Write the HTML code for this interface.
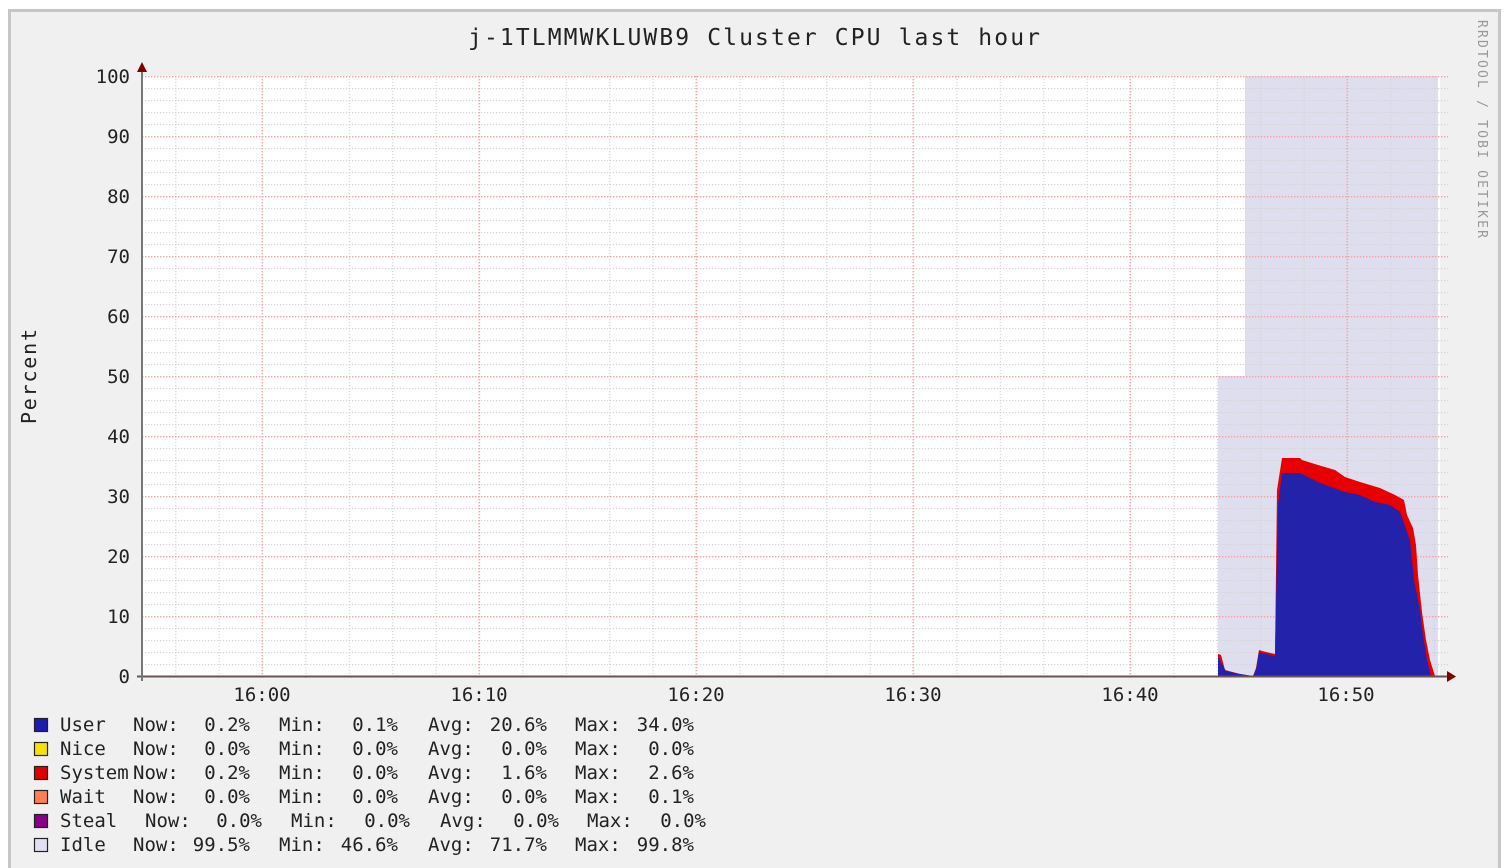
<!DOCTYPE html>
<html><head><meta charset="utf-8"><style>
html,body{margin:0;padding:0;background:#fff;width:1504px;height:868px;overflow:hidden}
svg{display:block}
text{font-family:"DejaVu Sans Mono","Liberation Mono",monospace;fill:#222}
</style></head><body>
<svg width="1504" height="868" viewBox="0 0 1504 868" xmlns="http://www.w3.org/2000/svg">
<defs>
<pattern id="hmin" x="142" y="76" width="3" height="12" patternUnits="userSpaceOnUse"><rect width="1.2" height="1.2" fill="#d4d4d4"/></pattern>
<pattern id="hmaj" x="142" y="76" width="3" height="60" patternUnits="userSpaceOnUse"><rect width="1.4" height="1.4" fill="#f4a4a4"/></pattern>
<pattern id="vmin" x="175.2" y="76" width="43.4" height="3" patternUnits="userSpaceOnUse"><rect width="1.2" height="1.2" fill="#d4d4d4"/></pattern>
<pattern id="vmaj" x="261.5" y="76" width="217" height="3" patternUnits="userSpaceOnUse"><rect width="1.4" height="1.4" fill="#f4a4a4"/></pattern>
</defs>
<rect x="0" y="0" width="1504" height="868" fill="#fff"/>
<rect x="9.5" y="10.5" width="1490" height="860" fill="#f0f0f0" stroke="#c6c6c6" stroke-width="3"/>
<rect x="142" y="76" width="1298" height="600" fill="#fff"/>
<polygon points="1218,676 1218,376 1245,376 1245,76 1438,76 1438,676" fill="#dedeef"/>
<rect x="142" y="76" width="1306" height="600" fill="url(#hmin)"/>
<rect x="142" y="76" width="1298" height="600" fill="url(#vmin)"/>
<rect x="142" y="76" width="1306" height="601" fill="url(#hmaj)"/>
<rect x="142" y="76" width="1298" height="600" fill="url(#vmaj)"/>
<polygon fill="#e80000" points="1218,676 1218,654 1221,655 1225,670 1240,674 1253,676 1256,668 1259,650 1262,651 1275,654 1277,490 1282,458 1300,458 1302,460 1318,465 1335,470 1345,477 1360,482 1380,488 1395,495 1404,500 1407,515 1413,528 1416,545 1418,575 1422,612 1426,640 1430,660 1435,676"/>
<polygon fill="#2222aa" points="1218,676 1218,657 1222,664 1226,671 1240,674 1253,676 1256,670 1259,652 1262,653 1275,656 1278,505 1282,473 1300,473 1320,483 1345,492 1360,495 1375,502 1390,505 1400,512 1410,540 1414,580 1420,610 1423,635 1427,660 1431,676"/>
<line x1="137" y1="676.5" x2="1448" y2="676.5" stroke="#6a5555" stroke-width="2"/>
<polygon points="1447,671 1456,676.5 1447,682" fill="#800000"/>
<line x1="142" y1="681" x2="142" y2="70" stroke="#777" stroke-width="2"/>
<polygon points="137,72 142,62 147,72" fill="#800000"/>
<g font-size="19" text-anchor="end">
<text x="130" y="83">100</text><text x="130" y="143">90</text><text x="130" y="203">80</text><text x="130" y="263">70</text><text x="130" y="323">60</text><text x="130" y="383">50</text><text x="130" y="443">40</text><text x="130" y="503">30</text><text x="130" y="563">20</text><text x="130" y="623">10</text><text x="130" y="683">0</text>
</g>
<g font-size="19" text-anchor="middle">
<text x="262" y="701">16:00</text><text x="479" y="701">16:10</text><text x="696" y="701">16:20</text><text x="913" y="701">16:30</text><text x="1130" y="701">16:40</text><text x="1346" y="701">16:50</text>
</g>
<text x="468" y="45" font-size="23" textLength="572" lengthAdjust="spacing">j-1TLMMWKLUWB9 Cluster CPU last hour</text>
<text transform="translate(36,424) rotate(-90)" font-size="20" textLength="95" lengthAdjust="spacing">Percent</text>
<text transform="translate(1478,20) rotate(90)" font-size="13" textLength="218" lengthAdjust="spacing" style="fill:#999">RRDTOOL / TOBI OETIKER</text>
<g stroke="#222" stroke-width="1.2">
<rect x="34.5" y="718.5" width="13" height="13" fill="#1c1cb0"/>
<rect x="34.5" y="742.5" width="13" height="13" fill="#f8e000"/>
<rect x="34.5" y="766.5" width="13" height="13" fill="#e00000"/>
<rect x="34.5" y="790.5" width="13" height="13" fill="#ff7f50"/>
<rect x="34.5" y="814.5" width="13" height="13" fill="#880088"/>
<rect x="34.5" y="838.5" width="13" height="13" fill="#e0e0f0"/>
</g>
<g font-size="19">
<text x="60" y="731">User</text><text x="133" y="731">Now:</text><text x="250" y="731" text-anchor="end">0.2%</text><text x="279" y="731">Min:</text><text x="398" y="731" text-anchor="end">0.1%</text><text x="428" y="731">Avg:</text><text x="547" y="731" text-anchor="end">20.6%</text><text x="575" y="731">Max:</text><text x="694" y="731" text-anchor="end">34.0%</text>
<text x="60" y="755">Nice</text><text x="133" y="755">Now:</text><text x="250" y="755" text-anchor="end">0.0%</text><text x="279" y="755">Min:</text><text x="398" y="755" text-anchor="end">0.0%</text><text x="428" y="755">Avg:</text><text x="547" y="755" text-anchor="end">0.0%</text><text x="575" y="755">Max:</text><text x="694" y="755" text-anchor="end">0.0%</text>
<text x="60" y="779">System</text><text x="133" y="779">Now:</text><text x="250" y="779" text-anchor="end">0.2%</text><text x="279" y="779">Min:</text><text x="398" y="779" text-anchor="end">0.0%</text><text x="428" y="779">Avg:</text><text x="547" y="779" text-anchor="end">1.6%</text><text x="575" y="779">Max:</text><text x="694" y="779" text-anchor="end">2.6%</text>
<text x="60" y="803">Wait</text><text x="133" y="803">Now:</text><text x="250" y="803" text-anchor="end">0.0%</text><text x="279" y="803">Min:</text><text x="398" y="803" text-anchor="end">0.0%</text><text x="428" y="803">Avg:</text><text x="547" y="803" text-anchor="end">0.0%</text><text x="575" y="803">Max:</text><text x="694" y="803" text-anchor="end">0.1%</text>
<text x="60" y="827">Steal</text><text x="145" y="827">Now:</text><text x="262" y="827" text-anchor="end">0.0%</text><text x="291" y="827">Min:</text><text x="410" y="827" text-anchor="end">0.0%</text><text x="440" y="827">Avg:</text><text x="559" y="827" text-anchor="end">0.0%</text><text x="587" y="827">Max:</text><text x="706" y="827" text-anchor="end">0.0%</text>
<text x="60" y="851">Idle</text><text x="133" y="851">Now:</text><text x="250" y="851" text-anchor="end">99.5%</text><text x="279" y="851">Min:</text><text x="398" y="851" text-anchor="end">46.6%</text><text x="428" y="851">Avg:</text><text x="547" y="851" text-anchor="end">71.7%</text><text x="575" y="851">Max:</text><text x="694" y="851" text-anchor="end">99.8%</text>
</g>
</svg>
</body></html>
